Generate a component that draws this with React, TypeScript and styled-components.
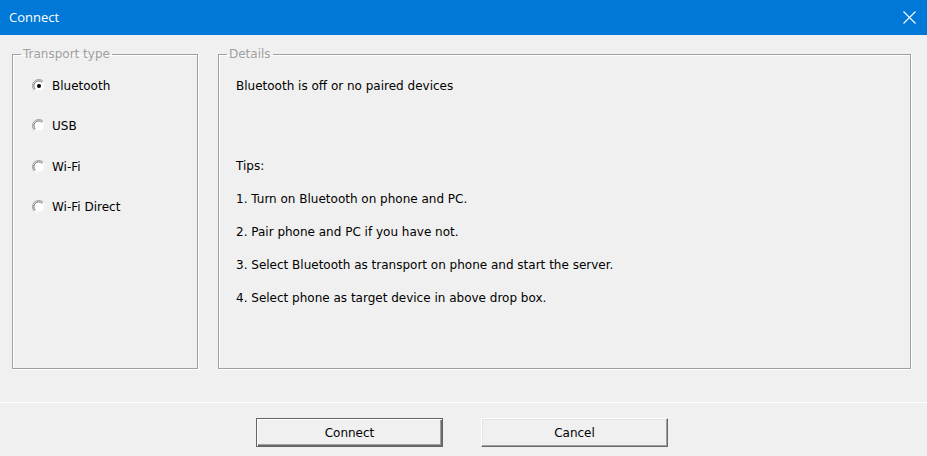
import React from "react";
import styled, { createGlobalStyle } from "styled-components";

const Global = createGlobalStyle`
  html, body { margin: 0; padding: 0; background: #f0f0f0; }
  body { font-family: "DejaVu Sans", Verdana, sans-serif; font-size: 12px; color: #000; }
  * { box-sizing: border-box; }
`;

const Window = styled.div`
  width: 927px;
  height: 456px;
  display: flex;
  flex-direction: column;
  background: #f0f0f0;
  overflow: hidden;
`;

const TitleBar = styled.div`
  height: 35px;
  flex: none;
  background: #0078d7;
  color: #fff;
  display: flex;
  align-items: center;
  justify-content: space-between;
  padding: 0 10px 1px 9px;
  font-family: "Open Sans", "Noto Sans", sans-serif;
  font-size: 13px;
`;

const CloseButton = styled.button`
  width: 16px;
  height: 16px;
  padding: 0;
  border: 0;
  background: transparent;
  display: flex;
  align-items: center;
  justify-content: center;
  margin-top: 1px;
`;

const Main = styled.div`
  height: 367px;
  flex: none;
  display: flex;
  gap: 20px;
  padding: 12px 16px 0 12px;
`;

const Group = styled.fieldset<{ $width?: number }>`
  margin: 0;
  padding: 0;
  height: 322px;
  width: ${(p) => (p.$width ? `${p.$width}px` : "auto")};
  flex: ${(p) => (p.$width ? "none" : "1")};
  border: 1px solid #a0a0a0;
  box-shadow: 1px 1px 0 #fff, inset 1px 1px 0 #fff;
  min-width: 0;
`;

const Legend = styled.legend`
  margin-left: 8px;
  padding: 0 2px;
  line-height: 15px;
  color: #a0a0a0;
  font-size: 12px;
`;

const RadioList = styled.div`
  display: flex;
  flex-direction: column;
  gap: 20.4px;
  padding: 14px 0 0 19px;
`;

const RadioRow = styled.label`
  display: flex;
  align-items: center;
  height: 20px;
  gap: 6px;
`;

const RadioText = styled.span`
  line-height: 20px;
`;

const DetailsBody = styled.div`
  display: flex;
  flex-direction: column;
  padding: 14px 0 0 17px;
`;

const Line = styled.div<{ $gap?: number }>`
  height: 20px;
  line-height: 20px;
  margin-top: ${(p) => p.$gap ?? 0}px;
  white-space: nowrap;
`;

const Footer = styled.div`
  flex: 1;
  border-top: 1px solid #fff;
  display: flex;
  justify-content: center;
  align-items: flex-start;
  gap: 38px;
  padding-top: 15px;
  padding-right: 3px;
`;

const Button = styled.button<{ $default?: boolean }>`
  width: 187px;
  height: 29px;
  font-family: "DejaVu Sans", Verdana, sans-serif;
  font-size: 12px;
  color: #000;
  background: #f0f0f0;
  padding: 0;
  border: 1px solid;
  border-color: ${(p) =>
    p.$default ? "#646464" : "#fff #696969 #696969 #fff"};
  box-shadow: ${(p) =>
    p.$default
      ? "inset 1px 1px 0 #fff, inset -1px -1px 0 #696969, inset -2px -2px 0 #a0a0a0"
      : "inset -1px -1px 0 #a0a0a0, inset 1px 1px 0 #e3e3e3"};
`;

const Radio = ({ checked }: { checked?: boolean }) => (
  <svg width="14" height="14" viewBox="0 0 14 14">
    <circle cx="7" cy="7" r="6" fill="#fff" />
    <path d="M2.3 11.2 A6 6 0 0 1 11.2 2.3" stroke="#a0a0a0" strokeWidth="1" fill="none" />
    <path d="M3.3 10.2 A4.6 4.6 0 0 1 10.2 3.3" stroke="#696969" strokeWidth="1" fill="none" />
    <path d="M12.3 4 A6 6 0 0 1 4 12.3" stroke="#fff" strokeWidth="1" fill="none" />
    <path d="M11.3 4.8 A4.6 4.6 0 0 1 4.8 11.3" stroke="#e3e3e3" strokeWidth="1" fill="none" />
    {checked && <circle cx="7" cy="7" r="2" fill="#000" />}
  </svg>
);

const options = ["Bluetooth", "USB", "Wi-Fi", "Wi-Fi Direct"];

const tips = [
  "1. Turn on Bluetooth on phone and PC.",
  "2. Pair phone and PC if you have not.",
  "3. Select Bluetooth as transport on phone and start the server.",
  "4. Select phone as target device in above drop box.",
];

export default function App() {
  return (
    <>
      <Global />
      <Window>
        <TitleBar>
          <span>Connect</span>
          <CloseButton aria-label="Close">
            <svg width="13" height="13" viewBox="0 0 13 13">
              <path d="M0.5 0.5 L12.5 12.5 M12.5 0.5 L0.5 12.5" stroke="#fff" strokeWidth="1.1" />
            </svg>
          </CloseButton>
        </TitleBar>
        <Main>
          <Group $width={186}>
            <Legend>Transport type</Legend>
            <RadioList>
              {options.map((o, i) => (
                <RadioRow key={o}>
                  <Radio checked={i === 0} />
                  <RadioText>{o}</RadioText>
                </RadioRow>
              ))}
            </RadioList>
          </Group>
          <Group>
            <Legend>Details</Legend>
            <DetailsBody>
              <Line>Bluetooth is off or no paired devices</Line>
              <Line $gap={60}>Tips:</Line>
              {tips.map((t) => (
                <Line key={t} $gap={13}>
                  {t}
                </Line>
              ))}
            </DetailsBody>
          </Group>
        </Main>
        <Footer>
          <Button $default>Connect</Button>
          <Button>Cancel</Button>
        </Footer>
      </Window>
    </>
  );
}
